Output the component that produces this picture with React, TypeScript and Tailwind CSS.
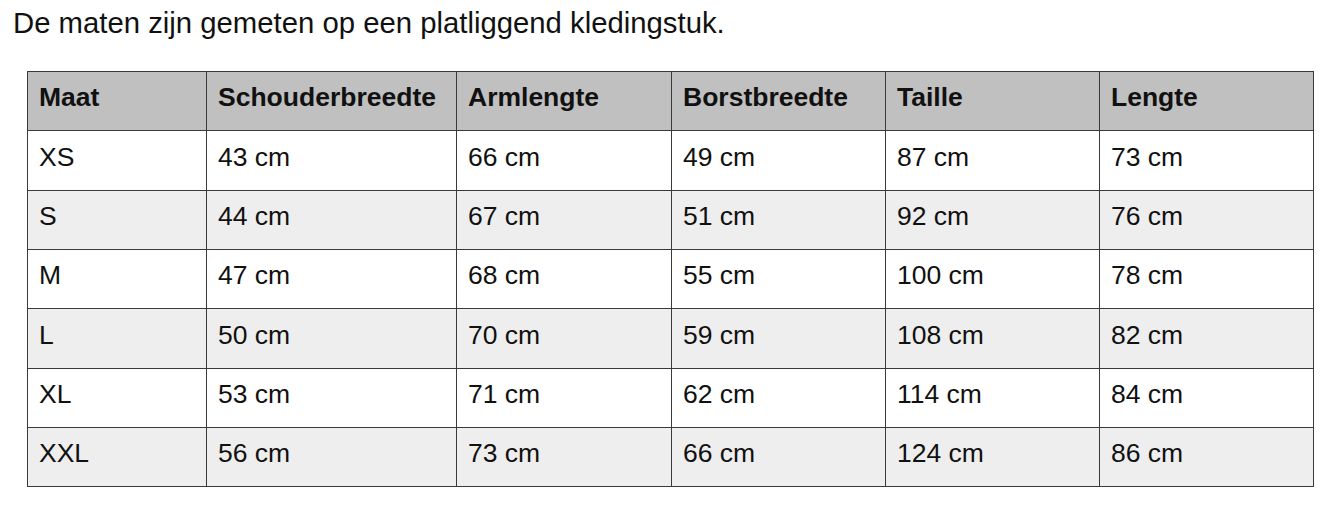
const headers = ["Maat", "Schouderbreedte", "Armlengte", "Borstbreedte", "Taille", "Lengte"];

const rows = [
  ["XS", "43 cm", "66 cm", "49 cm", "87 cm", "73 cm"],
  ["S", "44 cm", "67 cm", "51 cm", "92 cm", "76 cm"],
  ["M", "47 cm", "68 cm", "55 cm", "100 cm", "78 cm"],
  ["L", "50 cm", "70 cm", "59 cm", "108 cm", "82 cm"],
  ["XL", "53 cm", "71 cm", "62 cm", "114 cm", "84 cm"],
  ["XXL", "56 cm", "73 cm", "66 cm", "124 cm", "86 cm"],
];

const widths = ["w-[179px]", "w-[250px]", "w-[215px]", "w-[214px]", "w-[214px]", "w-[214px]"];
// row heights alternate slightly to land on the reference grid lines
const heights = ["h-[60px]", "h-[59px]", "h-[59px]", "h-[60px]", "h-[59px]", "h-[59px]"];

export default function App() {
  return (
    <div className="w-[1330px] h-[510px] bg-white text-[#111] font-['Liberation_Sans',Arial,sans-serif]">
      <p className="pl-[13px] pt-[3px] text-[29.3px] leading-[40px]">
        De maten zijn gemeten op een platliggend kledingstuk.
      </p>
      <table className="ml-[27px] mt-[28px] border-collapse table-fixed w-[1287px] text-[26.5px]">
        <thead>
          <tr className="bg-[#c0c0c0] h-[59px]">
            {headers.map((h, i) => (
              <th
                key={h}
                className={`${widths[i]} border border-[#3a3a3a] pl-[11px] pr-0 pb-[6px] text-left font-bold align-middle`}
              >
                {h}
              </th>
            ))}
          </tr>
        </thead>
        <tbody>
          {rows.map((r, ri) => (
            <tr key={r[0]} className={`${heights[ri]} ${ri % 2 === 1 ? "bg-[#eeeeee]" : "bg-white"}`}>
              {r.map((c, ci) => (
                <td key={ci} className="border border-[#3a3a3a] pl-[11px] pr-0 pb-[6px] align-middle">
                  {c}
                </td>
              ))}
            </tr>
          ))}
        </tbody>
      </table>
    </div>
  );
}
